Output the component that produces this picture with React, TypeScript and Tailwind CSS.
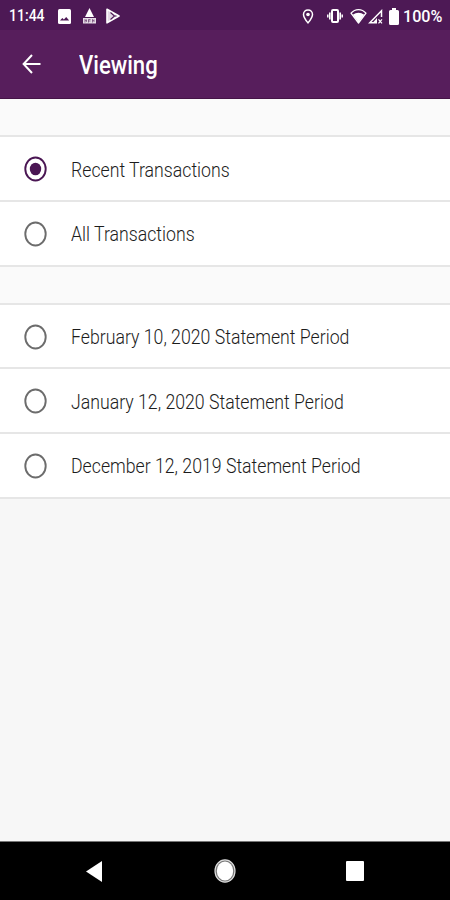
import { useState } from "react";
import clsx from "clsx";

const recentOptions = ["Recent Transactions", "All Transactions"];

const statementOptions = [
  "February 10, 2020 Statement Period",
  "January 12, 2020 Statement Period",
  "December 12, 2019 Statement Period",
];

function StatusBar() {
  return (
    <div className="flex h-[30px] items-center justify-between bg-[#4d1955] pl-[9px] pr-[7px] pt-[2px] text-white">
      <div className="flex items-center">
        <span className="w-[49px] text-[16.5px] font-medium leading-none">
          <span className="inline-block origin-left scale-x-[0.85]">11:44</span>
        </span>
        <svg className="h-[15px] w-[13px]" viewBox="0 0 13 15">
          <rect width="13" height="15" rx="1.5" fill="#fff" />
          <path d="M2 11.5 4.3 9l1.6 1.5L8.2 8l3 3.5Z" fill="#4d1955" />
        </svg>
        <svg className="ml-3 h-[16px] w-[13px]" viewBox="0 0 13 16" fill="#fff">
          <path d="M6.5 0 11 9H2Z" />
          <path d="M0 10h13v5.5H0Z" opacity=".85" />
          <path d="M2 14.5v-3l1.5 2v-2M5.5 14.5v-3h2M5.5 13h2M9.5 14.5v-3l1.5 2v-2" fill="none" stroke="#4d1955" strokeWidth=".6" />
        </svg>
        <svg className="ml-[10px] h-[16px] w-[14px]" viewBox="0 0 14 16">
          <path d="M1 1.2 13 8 1 14.8Z" fill="#e3d8e5" stroke="#fff" strokeWidth="1.6" strokeLinejoin="round" />
          <path d="m4.5 4.5 4 3.5-4 3.5M8 8h2.5" fill="none" stroke="#4d1955" strokeWidth="1.1" />
        </svg>
      </div>
      <div className="flex items-center">
        <svg className="h-[15px] w-[12px]" viewBox="0 0 12 15">
          <path d="M6 .9C3.4.9 1.5 2.8 1.5 5.4 1.5 8.4 6 13.9 6 13.9S10.5 8.4 10.5 5.4C10.5 2.8 8.6.9 6 .9Z" fill="none" stroke="#fff" strokeWidth="1.5" />
          <circle cx="6" cy="5.5" r="1.8" fill="#fff" />
        </svg>
        <svg className="ml-[13px] h-[14px] w-[16px]" viewBox="0 0 16 14" fill="none" stroke="#fff">
          <rect x="5" y="1" width="6" height="12" rx="1" strokeWidth="2" />
          <path d="M2.8 3.5v7M13.2 3.5v7" strokeWidth="1.6" />
          <path d="M.8 5.5v3M15.2 5.5v3" strokeWidth="1.5" />
        </svg>
        <svg className="ml-[7px] h-[16px] w-[17px]" viewBox="0 0 17 16">
          <path d="M1 5.2C5.2.3 11.8.3 16 5.2L8.5 15Z" fill="none" stroke="#fff" strokeWidth="1.3" strokeLinejoin="round" />
          <path d="M2.8 6.7c3.5-2.7 7.9-2.7 11.4 0L8.5 14.5Z" fill="#fff" />
        </svg>
        <svg className="ml-[1px] h-[15px] w-[15px]" viewBox="0 0 15 15" fill="none" stroke="#fff">
          <path d="M13.5 8V1.8L1.8 13.8H9" strokeWidth="1.5" />
          <path d="M5 13.5 9 9v4.5Z" fill="#fff" stroke="none" />
          <path d="m10.5 10.3 3.5 4M14 10.3l-3.5 4" strokeWidth="1.2" />
        </svg>
        <svg className="ml-[6px] h-[17px] w-[10px]" viewBox="0 0 10 17" fill="#fff">
          <path d="M3 0h4v2h1.5Q10 2 10 3.5v12Q10 17 8.5 17h-7Q0 17 0 15.5v-12Q0 2 1.5 2H3Z" />
        </svg>
        <span className="ml-[4px] w-[40px] text-[17px] font-medium leading-none">
          <span className="inline-block origin-left scale-x-[0.95]">100%</span>
        </span>
      </div>
    </div>
  );
}

function Header() {
  return (
    <header className="flex h-[69px] items-center border-b border-[#451447] bg-[#571e5c] pl-[22px] text-white">
      <svg className="h-[20px] w-[19px]" viewBox="0 0 19 20" fill="none" stroke="#fff" strokeWidth="2">
        <path d="M18.5 10H1.8M10 1 1.6 10 10 19" />
      </svg>
      <h1 className="ml-[38px] mt-[3px] origin-left scale-x-[0.885] text-[25px] font-medium leading-none">Viewing</h1>
    </header>
  );
}

interface OptionRowProps {
  label: string;
  checked: boolean;
  onSelect: () => void;
}

function OptionRow({ label, checked, onSelect }: OptionRowProps) {
  return (
    <button
      type="button"
      role="radio"
      aria-checked={checked}
      onClick={onSelect}
      className="flex h-[64.7px] w-full items-center border-b-2 border-[#e6e6e6] bg-white pl-6 pt-[1px] text-left"
    >
      <svg className={clsx("h-[26px] w-[23px]", checked ? "text-[#4a1653]" : "text-[#6c6c6c]")} viewBox="0 0 23 26">
        <ellipse cx="11.5" cy="13" rx="10.2" ry="11.5" fill="none" stroke="currentColor" strokeWidth="1.9" />
        {checked && <ellipse cx="11.5" cy="13" rx="5.7" ry="6.3" fill="currentColor" />}
      </svg>
      <span className="ml-[24px] mt-[2px] origin-left scale-x-[0.918] whitespace-nowrap text-[19.3px] font-light leading-none text-[#1c1c1c]">
        {label}
      </span>
    </button>
  );
}

function NavigationBar() {
  return (
    <nav className="flex h-[59px] items-center justify-between border-t border-[#777] bg-black pl-[86px] pr-[86px]">
      <svg className="h-[21px] w-[16px]" viewBox="0 0 16 21" fill="#fff">
        <path d="M16 0v21L0 10.5Z" />
      </svg>
      <svg className="ml-[2px] h-[24px] w-[22px]" viewBox="0 0 22 24">
        <ellipse cx="11" cy="12" rx="10" ry="11.2" fill="#777" stroke="#ddd" strokeWidth="1.2" />
        <ellipse cx="11" cy="12" rx="8.2" ry="9.4" fill="#fff" />
      </svg>
      <svg className="h-[20px] w-[18px]" viewBox="0 0 18 20">
        <rect width="18" height="20" rx="1" fill="#fff" />
      </svg>
    </nav>
  );
}

export default function App() {
  const [selected, setSelected] = useState("Recent Transactions");

  const renderOption = (label: string) => (
    <OptionRow key={label} label={label} checked={selected === label} onSelect={() => setSelected(label)} />
  );

  return (
    <div className="flex h-[900px] w-[450px] flex-col overflow-hidden bg-[#f7f7f7] font-['Roboto',sans-serif]">
      <StatusBar />
      <Header />
      <main role="radiogroup" className="flex-1">
        <div className="h-[38.4px] border-b-2 border-[#e6e6e6] bg-[#fafafa]" />
        {recentOptions.map(renderOption)}
        <div className="h-[38px] border-b-2 border-[#e6e6e6] bg-[#fafafa]" />
        {statementOptions.map(renderOption)}
      </main>
      <NavigationBar />
    </div>
  );
}
